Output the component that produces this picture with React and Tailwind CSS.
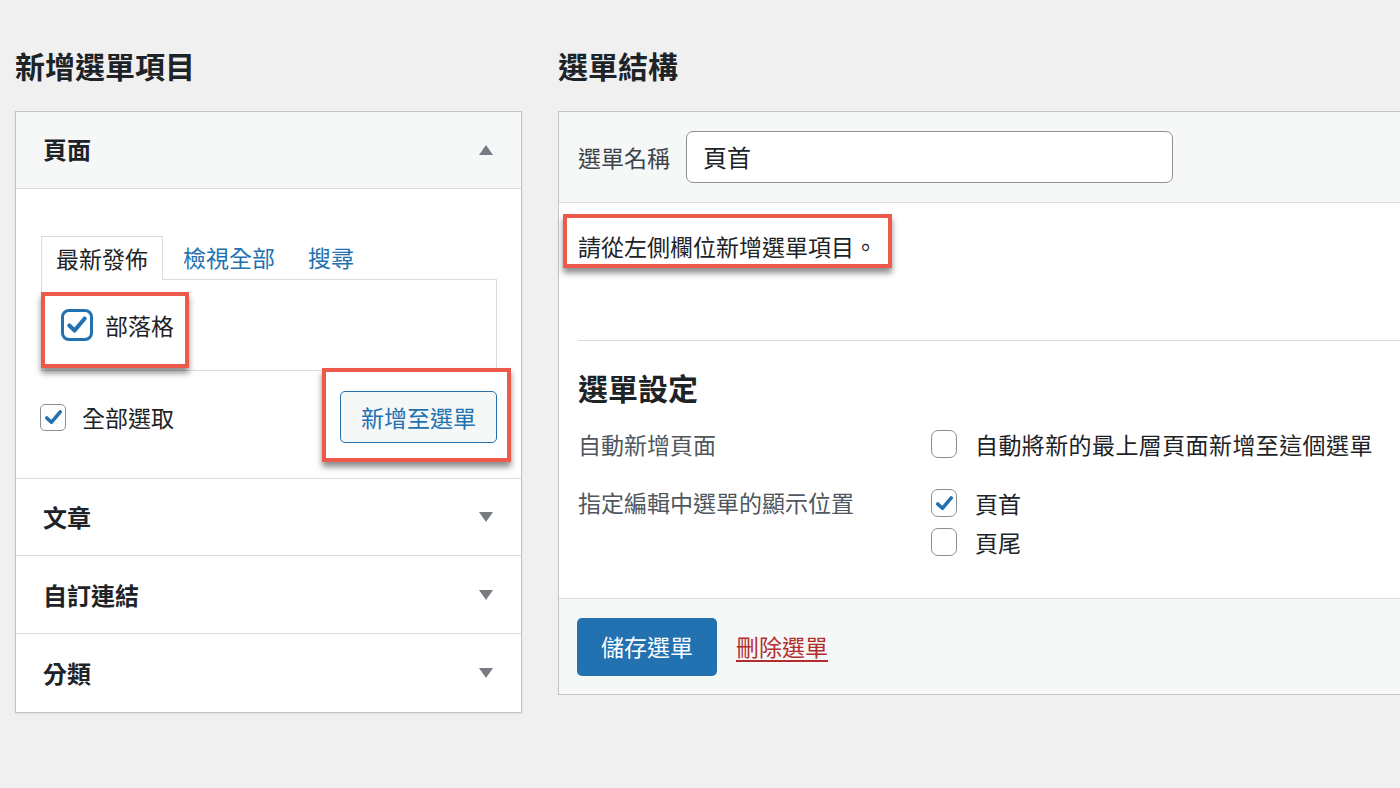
import React from 'react'

const FONT = { fontFamily: '"Noto Sans CJK TC", "Noto Sans", "Liberation Sans", sans-serif' }

function Triangle({ up }) {
  return (
    <svg width="14" height="10" viewBox="0 0 14 10" className="shrink-0">
      {up ? <path d="M7 0 L14 10 L0 10 Z" fill="#787c82" /> : <path d="M0 0 L14 0 L7 10 Z" fill="#787c82" />}
    </svg>
  )
}

function Check({ size }) {
  return (
    <svg width={size} height={size} viewBox="0 0 20 20">
      <path d="M3.6 10.4 L8 14.6 L16.4 4.6" fill="none" stroke="#2271b1" strokeWidth="3.4" strokeLinecap="round" strokeLinejoin="round" />
    </svg>
  )
}

function Box({ checked, size = 21, className }) {
  return (
    <span className={'flex shrink-0 items-center justify-center bg-white ' + className}>
      {checked && <Check size={size} />}
    </span>
  )
}

function RedMark({ className }) {
  return (
    <span className={'pointer-events-none absolute border-[4px] border-[#ee5a4a] shadow-[0_5px_6px_rgba(0,0,0,0.45)] ' + className}></span>
  )
}

function Section({ title, h }) {
  return (
    <div className={'flex items-center justify-between border-t border-[#dcdcde] pl-[27px] pr-[28px] ' + h}>
      <span className="text-[24px] font-bold text-[#1d2327]">{title}</span>
      <Triangle />
    </div>
  )
}

export default function App() {
  return (
    <div className="flex h-[788px] w-[1400px] overflow-hidden bg-[#f0f0f1] pl-[15px] text-[#1d2327]" style={FONT}>
      {/* left column */}
      <div className="w-[507px] shrink-0">
        <h2 className="pt-[46px] text-[30px] font-bold leading-[38px]">新增選單項目</h2>
        <div className="mt-[27px] border border-[#c3c4c7] bg-white shadow-[0_1px_2px_rgba(0,0,0,0.08)]">
          <div className="flex h-[77px] items-center justify-between border-b border-[#dcdcde] bg-[#f6f7f7] pl-[27px] pr-[28px]">
            <span className="-mt-[3px] text-[24px] font-bold">頁面</span>
            <Triangle up />
          </div>
          <div className="pl-[25px] pr-[24px] pb-[35px] pt-[46px]">
            <div className="flex items-end text-[23px]">
              <span className="relative z-10 -mb-px flex h-[44px] items-center border border-b-0 border-[#dcdcde] bg-white px-[14px]">最新發佈</span>
              <span className="ml-[20px] flex h-[44px] items-center text-[#2271b1]">檢視全部</span>
              <span className="ml-[33px] flex h-[44px] items-center text-[#2271b1]">搜尋</span>
            </div>
            <div className="relative flex h-[92px] items-center border border-[#dcdcde] pl-[19px]">
              <Box checked size={24} className="h-[32px] w-[32px] rounded-[8px] border-[3px] border-[#2271b1]" />
              <span className="ml-[12px] text-[23px]">部落格</span>
              <RedMark className="-left-[1px] top-[12px] h-[76px] w-[148px]" />
            </div>
            <div className="mt-[20px] flex items-center justify-between">
              <div className="flex items-center">
                <Box checked size={21} className="ml-[-1px] h-[27px] w-[26px] rounded-[5px] border-[1.5px] border-[#8c8f94]" />
                <span className="ml-[16px] text-[23px]">全部選取</span>
              </div>
              <div className="relative">
                <button className="h-[52px] w-[157px] rounded-[5px] border border-[#2271b1] bg-[#f6f7f7] text-[23px] text-[#2271b1]">新增至選單</button>
                <RedMark className="-left-[18px] -top-[23px] h-[94px] w-[189px]" />
              </div>
            </div>
          </div>
          <Section title="文章" h="h-[77px]" />
          <Section title="自訂連結" h="h-[78px]" />
          <Section title="分類" h="h-[79px]" />
        </div>
      </div>

      {/* right column */}
      <div className="ml-[36px] w-[900px] shrink-0">
        <h2 className="pt-[46px] text-[30px] font-bold leading-[38px]">選單結構</h2>
        <div className="mt-[27px] border border-r-0 border-[#c3c4c7] bg-white">
          <div className="flex h-[91px] items-center border-b border-[#dcdcde] bg-[#f6f7f7] pl-[19px]">
            <span className="text-[23px] text-[#3c434a]">選單名稱</span>
            <div className="ml-[16px] flex h-[52px] w-[487px] items-center rounded-[7px] border border-[#8c8f94] bg-white px-[16px] text-[24px]">頁首</div>
          </div>
          <div className="px-[19px] pt-[27px]">
            <div className="flex">
              <p className="relative text-[23px] leading-[32px]">
                請從左側欄位新增選單項目。
                <RedMark className="-left-[15px] -top-[16px] h-[54px] w-[329px]" />
              </p>
            </div>
            <div className="h-[78px]"></div>
            <div className="border-t border-[#dcdcde] pb-[40px] pt-[27px]">
              <h3 className="text-[30px] font-bold leading-[38px]">選單設定</h3>
              <div className="mt-[22px] flex text-[23px] leading-[32px]">
                <span className="w-[353px] text-[#50575e]">自動新增頁面</span>
                <div className="flex items-center">
                  <Box className="h-[28px] w-[26px] rounded-[7px] border-[1.5px] border-[#8c8f94]" />
                  <span className="ml-[18px] tracking-[0.4px]">自動將新的最上層頁面新增至這個選單</span>
                </div>
              </div>
              <div className="mt-[26px] flex text-[23px] leading-[32px]">
                <span className="w-[353px] text-[#50575e]">指定編輯中選單的顯示位置</span>
                <div className="mt-[1px] flex flex-col gap-[7px]">
                  <div className="flex items-center">
                    <Box checked size={21} className="h-[28px] w-[26px] rounded-[7px] border-[1.5px] border-[#8c8f94]" />
                    <span className="ml-[18px]">頁首</span>
                  </div>
                  <div className="flex items-center">
                    <Box className="h-[28px] w-[26px] rounded-[7px] border-[1.5px] border-[#8c8f94]" />
                    <span className="ml-[18px]">頁尾</span>
                  </div>
                </div>
              </div>
            </div>
          </div>
          <div className="flex h-[96px] items-center border-t border-[#dcdcde] bg-[#f6f7f7] pl-[18px]">
            <button className="h-[58px] w-[140px] rounded-[5px] bg-[#2271b1] text-[23px] text-white">儲存選單</button>
            <span className="ml-[19px] text-[23px] text-[#b32d2e] underline underline-offset-4">刪除選單</span>
          </div>
        </div>
      </div>
    </div>
  )
}
